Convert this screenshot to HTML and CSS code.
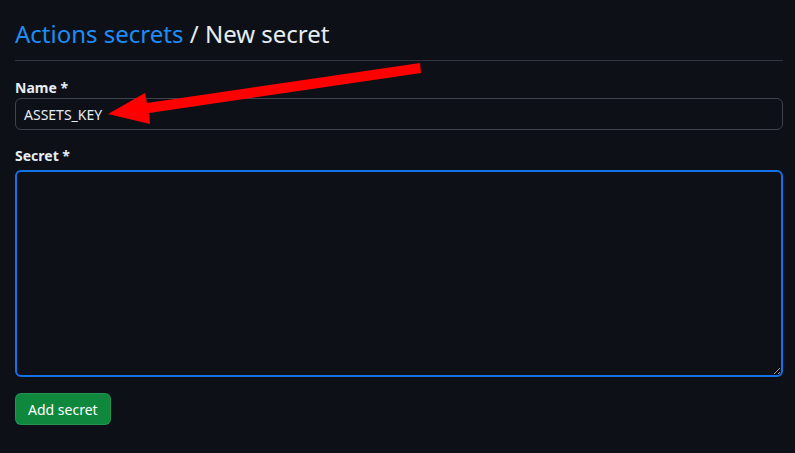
FILE: index.html
```html
<!DOCTYPE html>
<html lang="en">
<head>
<meta charset="utf-8">
<title>New secret</title>
<link rel="stylesheet" href="styles.css">
</head>
<body>
<main class="page">
  <h2 class="title"><a class="title-link" href="#">Actions secrets</a> / New secret</h2>
  <form class="form">
    <label class="label label-name" for="name">Name *</label>
    <input class="input" id="name" type="text" value="ASSETS_KEY">
    <label class="label label-secret" for="secret">Secret *</label>
    <textarea class="textarea" id="secret"></textarea>
    <div class="actions"><button class="btn" type="button">Add secret</button></div>
  </form>
  <svg class="arrow" width="795" height="453" viewBox="0 0 795 453" aria-hidden="true">
    <polygon fill="#ff0000" points="108,114 145,93 147,103 420,63 421,73 149,113 150,124"/>
  </svg>
</main>
</body>
</html>
```

FILE: styles.css
```css
html, body {
  margin: 0;
  background: #0d1117;
}
body {
  font-family: "Noto Sans", "Open Sans", sans-serif;
  color: #e6edf3;
}
.page {
  position: relative;
  padding: 16px 12px 0 15px;
  height: 437px;
}
.title {
  margin: 0;
  font-size: 24px;
  font-weight: 400;
  line-height: 36px;
  padding-bottom: 8px;
  border-bottom: 1px solid #30363d;
  color: #e6edf3;
}
.title-link {
  color: #1f8cf5;
  text-decoration: none;
}
.form {
  display: flex;
  flex-direction: column;
  padding-top: 16px;
}
.label {
  font-size: 14px;
  font-weight: 700;
  line-height: 21px;
}
.label-secret {
  margin-top: 15px;
  margin-bottom: 4px;
}
.input {
  box-sizing: border-box;
  height: 32px;
  width: 100%;
  margin: 0;
  padding: 0 8px;
  font-family: inherit;
  font-size: 14px;
  color: #e6edf3;
  background: #0d1117;
  border: 1px solid #3d444d;
  border-radius: 6px;
  outline: none;
}
.textarea {
  display: block;
  box-sizing: border-box;
  height: 207px;
  width: 100%;
  margin: 0;
  padding: 8px;
  font-family: inherit;
  font-size: 14px;
  color: #e6edf3;
  background: #0d1117;
  border: 2px solid #1471e6;
  border-radius: 6px;
  outline: none;
  resize: vertical;
}
.actions {
  display: flex;
  margin-top: 16px;
}
.btn {
  box-sizing: border-box;
  height: 32px;
  padding: 0 12px;
  font-family: inherit;
  font-size: 14px;
  font-weight: 400;
  color: #ffffff;
  background: #0f883e;
  border: 1px solid rgba(240, 246, 252, 0.1);
  border-radius: 6px;
}
.arrow {
  position: absolute;
  left: 0;
  top: 0;
  pointer-events: none;
}
```
